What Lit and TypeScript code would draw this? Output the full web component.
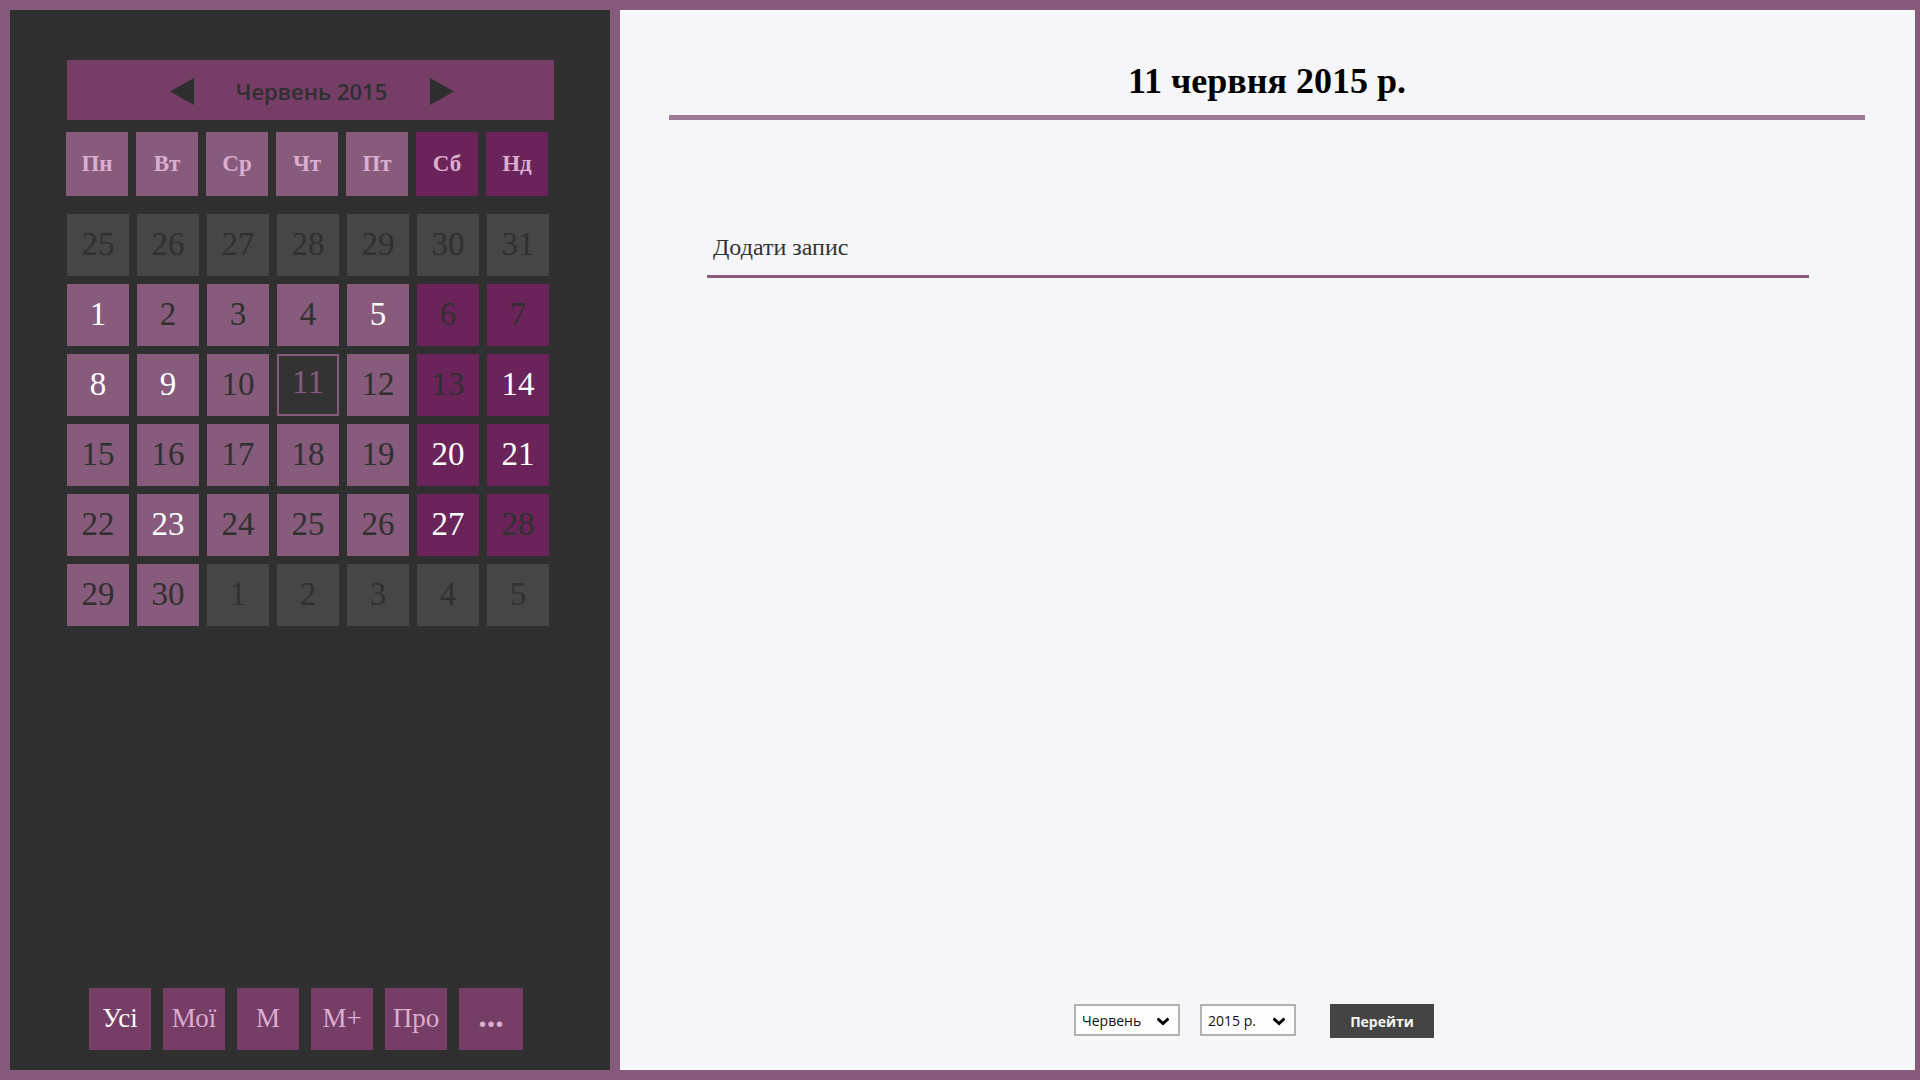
import { LitElement, html, css, svg } from "lit";
import { customElement, property, state } from "lit/decorators.js";
import { classMap } from "lit/directives/class-map.js";

interface Day {
  value: number;
  outside: boolean;
  marked: boolean;
}

const WEEKDAYS = ["Пн", "Вт", "Ср", "Чт", "Пт", "Сб", "Нд"];
const MARKED = new Set([1, 5, 8, 9, 14, 20, 21, 23, 27]);
const FILTERS = ["Усі", "Мої", "М", "М+", "Про"];
const MONTHS = [
  "Січень", "Лютий", "Березень", "Квітень", "Травень", "Червень",
  "Липень", "Серпень", "Вересень", "Жовтень", "Листопад", "Грудень",
];
const YEARS = [2013, 2014, 2015, 2016, 2017];

/* Six weeks, starting on Monday 25 May 2015. */
const DAYS: Day[] = Array.from({ length: 42 }, (_, i) => {
  const date = new Date(2015, 4, 25 + i);
  const outside = date.getMonth() !== 5;
  return { value: date.getDate(), outside, marked: !outside && MARKED.has(date.getDate()) };
});

@customElement("calendar-panel")
class CalendarPanel extends LitElement {
  @property({ type: Number }) selected = 11;
  @state() private filter = 0;

  static styles = css`
    :host {
      display: flex;
      flex-direction: column;
      box-sizing: border-box;
      padding: 50px 56px 20px 57px;
      background: #303030;
      font-family: "Liberation Serif", serif;
    }
    button {
      border: 0;
      margin: 0;
      padding: 0;
      font-family: inherit;
      cursor: pointer;
    }
    .bar {
      display: flex;
      align-items: center;
      justify-content: center;
      box-sizing: border-box;
      height: 60px;
      margin-bottom: 12px;
      padding: 2px 0 0 2px;
      background: #763d67;
    }
    .month {
      width: 236px;
      margin: 0;
      color: #303030;
      font: 600 22px/30px "Open Sans", "Noto Sans", sans-serif;
      text-align: center;
    }
    .arrow {
      display: flex;
      background: none;
    }
    .arrow svg {
      width: 24px;
      height: 27px;
      fill: #2e2e2e;
    }
    .grid {
      display: grid;
      grid-template-columns: repeat(7, 62px);
      gap: 8px;
    }
    .weekdays {
      margin: 0 0 18px -1px;
    }
    .weekday {
      display: flex;
      align-items: center;
      justify-content: center;
      height: 64px;
      background: #865b7b;
      color: #dbadd0;
      font-size: 23px;
      font-weight: 700;
    }
    .day {
      height: 62px;
      padding-bottom: 2px;
      background: #865b7b;
      color: #303030;
      font-size: 33px;
      line-height: 36px;
    }
    .weekend {
      background: #6b245a;
    }
    .marked {
      color: #fff;
    }
    .outside {
      background: #464646;
    }
    .selected {
      padding-bottom: 6px;
      border: 2px solid #865b7b;
      background: #333;
      color: #865b7b;
    }
    .filters {
      display: flex;
      gap: 12px;
      margin-top: auto;
      padding-left: 22px;
    }
    .filter {
      width: 62px;
      height: 62px;
      padding-bottom: 2px;
      background: #763d67;
      color: #dbadd0;
      font-size: 27px;
      line-height: 32px;
    }
    .active {
      color: #fff;
    }
    .more {
      width: 64px;
      padding-bottom: 6px;
      font-size: 34px;
      font-weight: 700;
    }
  `;

  render() {
    return html`
      <div class="bar">
        <button class="arrow" aria-label="Попередній місяць">
          ${svg`<svg viewBox="0 0 24 27"><path d="M24 0V27L0 13.500Z" /></svg>`}
        </button>
        <h2 class="month">Червень 2015</h2>
        <button class="arrow" aria-label="Наступний місяць">
          ${svg`<svg viewBox="0 0 24 27"><path d="M0 0V27L24 13.500Z" /></svg>`}
        </button>
      </div>
      <div class="grid weekdays">
        ${WEEKDAYS.map((name, i) => html`
          <div class=${classMap({ weekday: true, weekend: i > 4 })}>${name}</div>`)}
      </div>
      <div class="grid">
        ${DAYS.map((day, i) => html`
          <button
            class=${classMap({
              day: true,
              weekend: i % 7 > 4,
              marked: day.marked,
              outside: day.outside,
              selected: !day.outside && day.value === this.selected,
            })}
            @click=${() => { if (!day.outside) this.selected = day.value; }}
          >${day.value}</button>`)}
      </div>
      <nav class="filters">
        ${FILTERS.map((name, i) => html`
          <button
            class=${classMap({ filter: true, active: i === this.filter })}
            @click=${() => { this.filter = i; }}
          >${name}</button>`)}
        <button class="filter more">...</button>
      </nav>
    `;
  }
}

@customElement("day-panel")
class DayPanel extends LitElement {
  static styles = css`
    :host {
      display: flex;
      flex-direction: column;
      box-sizing: border-box;
      padding: 45px 50px 32px 49px;
      background: #f6f6f8;
      font-family: "Liberation Serif", serif;
    }
    .title {
      margin: 0;
      padding: 2px 0 10px;
      border-bottom: 5px solid #9c7894;
      color: #000;
      font-size: 36px;
      line-height: 48px;
      font-weight: 700;
      text-align: center;
    }
    .entry {
      margin: 103px 56px 0 38px;
      padding: 0 6px 4px;
      height: 55px;
      box-sizing: border-box;
      border: 0;
      border-bottom: 3px solid #865b7b;
      border-radius: 0;
      background: none;
      outline: 0;
      color: #333;
      font: 24px/32px "Liberation Serif", serif;
    }
    .entry::placeholder {
      color: #333;
      opacity: 1;
    }
    .jump {
      display: flex;
      align-items: flex-start;
      justify-content: center;
      margin-top: auto;
      padding-right: 26px;
      font-family: "Open Sans", "Noto Sans", sans-serif;
    }
    .field {
      display: grid;
      align-items: center;
      margin-right: 20px;
    }
    .field > * {
      grid-area: 1 / 1;
    }
    .select {
      appearance: none;
      box-sizing: border-box;
      width: 106px;
      height: 32px;
      padding: 2px 24px 0 6px;
      border: 2px solid #b2b2b4;
      border-radius: 0;
      background: #fdfdfd;
      color: #111;
      font: 14px/20px "Open Sans", "Noto Sans", sans-serif;
    }
    .year {
      width: 96px;
    }
    .chevron {
      justify-self: end;
      width: 12px;
      height: 9px;
      margin: 2px 11px 0 0;
      fill: none;
      stroke: #000;
      stroke-width: 3;
      pointer-events: none;
    }
    .go {
      width: 104px;
      height: 34px;
      margin-left: 14px;
      padding: 2px 0 0;
      border: 0;
      background: #444;
      color: #f4f4f4;
      font: 700 14px/20px "Open Sans", "Noto Sans", sans-serif;
      cursor: pointer;
    }
  `;

  private chevron() {
    return svg`<svg class="chevron" viewBox="0 0 12 9"><path d="M0.500 1.500L6 6.500L11.500 1.500" /></svg>`;
  }

  render() {
    return html`
      <h1 class="title">11 червня 2015 р.</h1>
      <input class="entry" type="text" placeholder="Додати запис" aria-label="Додати запис" />
      <form class="jump" @submit=${(e: Event) => e.preventDefault()}>
        <label class="field">
          <select class="select" aria-label="Місяць">
            ${MONTHS.map((name, i) => html`<option ?selected=${i === 5}>${name}</option>`)}
          </select>
          ${this.chevron()}
        </label>
        <label class="field">
          <select class="select year" aria-label="Рік">
            ${YEARS.map((year) => html`<option ?selected=${year === 2015}>${year} р.</option>`)}
          </select>
          ${this.chevron()}
        </label>
        <button class="go">Перейти</button>
      </form>
    `;
  }
}

@customElement("app-root")
class AppRoot extends LitElement {
  static styles = css`
    :host {
      display: grid;
      grid-template-columns: 600px 1fr;
      gap: 10px;
      box-sizing: border-box;
      min-height: 100vh;
      padding: 10px 5px 10px 10px;
      background: #865b7b;
    }
  `;

  render() {
    return html`
      <calendar-panel></calendar-panel>
      <day-panel></day-panel>
    `;
  }
}
